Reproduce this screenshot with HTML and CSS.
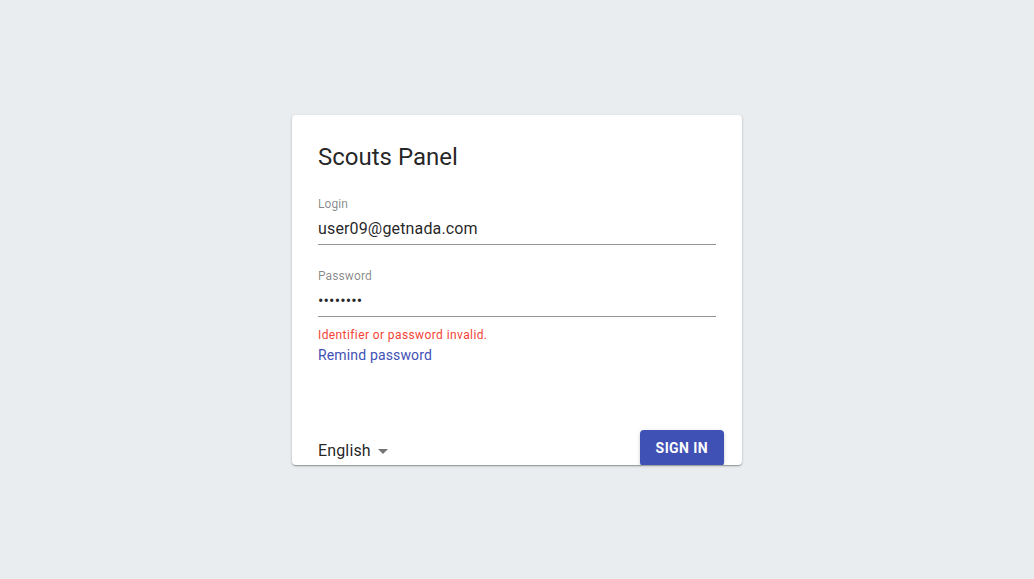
FILE: index.html
```html
<!DOCTYPE html>
<html lang="en">
<head>
<meta charset="utf-8">
<title>Scouts Panel</title>
<link rel="stylesheet" href="styles.css">
</head>
<body>
<main class="page">
  <form class="card">
    <div class="card-body">
      <h1 class="title">Scouts Panel</h1>
      <div class="field">
        <label class="label" for="login">Login</label>
        <div class="control"><input id="login" class="input" type="text" value="user09@getnada.com"></div>
      </div>
      <div class="field">
        <label class="label" for="password">Password</label>
        <div class="control"><input id="password" class="input" type="password" value="12345678"></div>
      </div>
      <p class="error">Identifier or password invalid.</p>
      <a class="link" href="#">Remind password</a>
    </div>
    <div class="card-footer">
      <div class="lang">
        <span class="lang-text">English</span>
        <svg class="caret" width="24" height="24" viewBox="0 0 24 24"><path d="M7 10l5 5 5-5z" fill="currentColor"/></svg>
      </div>
      <button class="btn" type="button">SIGN IN</button>
    </div>
  </form>
</main>
</body>
</html>
```
FILE: styles.css
```css
* { box-sizing: border-box; }
html, body {
  margin: 0;
  padding: 0;
  height: 100%;
}
body {
  background: #eaedf0;
  font-family: Roboto, "Liberation Sans", Arial, sans-serif;
  color: rgba(0, 0, 0, 0.87);
}
.page {
  height: 100vh;
  display: flex;
  align-items: center;
  justify-content: center;
}
.card {
  width: 450px;
  height: 350px;
  margin: 0;
  background: #fff;
  border-radius: 4px;
  overflow: hidden;
  box-shadow: 0 1px 3px rgba(0,0,0,0.2), 0 1px 1px rgba(0,0,0,0.14), 0 2px 1px -1px rgba(0,0,0,0.12);
  display: flex;
  flex-direction: column;
}
.card-body {
  padding: 26px 26px 0 26px;
  display: flex;
  flex-direction: column;
}
.title {
  margin: 0 0 23px 0;
  font-size: 24px;
  line-height: 32px;
  font-weight: 400;
  color: rgba(0, 0, 0, 0.87);
}
.field {
  display: flex;
  flex-direction: column;
  margin-bottom: 23px;
}
.label {
  font-size: 12px;
  line-height: 16px;
  color: rgba(0, 0, 0, 0.48);
  letter-spacing: 0.1px;
  margin-bottom: 4px;
}
.control {
  border-bottom: 1px solid #949494;
  padding-top: 1px;
  padding-bottom: 3px;
}
.input {
  display: block;
  width: 100%;
  height: 24px;
  border: none;
  outline: none;
  padding: 0;
  margin: 0;
  background: transparent;
  font-family: inherit;
  font-size: 16px;
  line-height: 24px;
  letter-spacing: 0.15px;
  color: rgba(0, 0, 0, 0.87);
}
.field + .error { margin-top: -13px; }
.error {
  margin: 0;
  font-size: 12px;
  line-height: 16px;
  color: #f44336;
  letter-spacing: 0.4px;
}
.link {
  margin-top: 2px;
  font-size: 14px;
  line-height: 20px;
  letter-spacing: 0.15px;
  color: #3f51b5;
  text-decoration: none;
  align-self: flex-start;
}
.card-footer {
  margin-top: 65px;
  padding: 0 18px 0 26px;
  display: flex;
  justify-content: space-between;
  align-items: flex-start;
}
.lang {
  display: flex;
  align-items: center;
  margin-top: 9px;
  height: 24px;
}
.lang-text {
  font-size: 16px;
  line-height: 24px;
  letter-spacing: 0.15px;
  color: rgba(0, 0, 0, 0.87);
}
.caret {
  display: block;
  color: rgba(0, 0, 0, 0.54);
  margin-top: 0;
}
.btn {
  height: 36px;
  min-width: 64px;
  padding: 0 16px;
  border: none;
  border-radius: 4px;
  background: #3f51b5;
  color: #fff;
  font-family: inherit;
  font-size: 14px;
  font-weight: 700;
  letter-spacing: 0.4px;
  box-shadow: 0 3px 1px -2px rgba(0,0,0,0.2), 0 2px 2px 0 rgba(0,0,0,0.14), 0 1px 5px 0 rgba(0,0,0,0.12);
  cursor: pointer;
}
```
